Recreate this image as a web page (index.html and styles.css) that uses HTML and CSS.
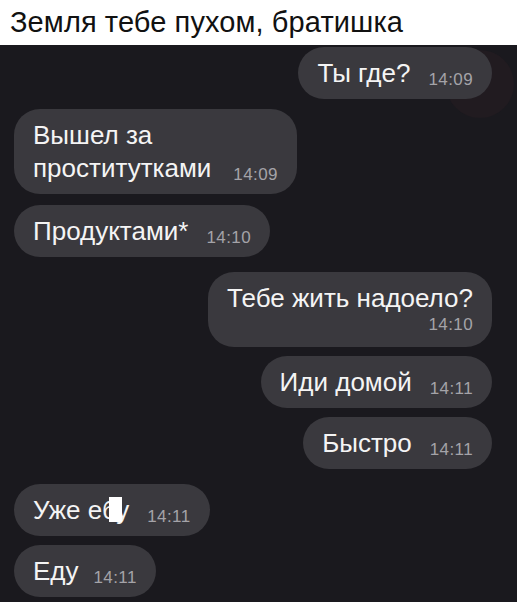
FILE: index.html
```html
<!DOCTYPE html>
<html lang="ru">
<head>
    <meta charset="UTF-8">
    <title>Земля тебе пухом, братишка</title>
    <link rel="stylesheet" href="styles.css">
</head>
<body>
    <div class="caption">Земля тебе пухом, братишка</div>

    <div class="chat">
        <div class="watermark"></div>

        <div class="msg out">Ты где?<span class="time">14:09</span></div>

        <div class="msg in group-first">Вышел за<br>проститутками<span class="time wide">14:09</span></div>
        <div class="msg in next">Продуктами*<span class="time">14:10</span></div>

        <div class="msg out group">Тебе жить надоело?<span class="time block">14:10</span></div>
        <div class="msg out">Иди домой<span class="time">14:11</span></div>
        <div class="msg out">Быстро<span class="time">14:11</span></div>

        <div class="msg in group">Уже е<span class="censored">бу</span><span class="time">14:11</span></div>
        <div class="msg in">Еду<span class="time tight">14:11</span></div>
    </div>
</body>
</html>
```

FILE: styles.css
```css
body {
    margin: 0;
    background-color: #fff;
    font-family: "Liberation Sans", Arial, sans-serif;
    width: 517px;
    height: 604px;
    overflow: hidden;
}
.caption {
    height: 45px;
    padding-left: 10px;
    font-size: 29px;
    line-height: 44px;
    letter-spacing: 0.1px;
    color: #111;
}
.chat {
    position: relative;
    background-color: #1a191e;
    height: 557px;
    padding: 2px 25px 0 14px;
    display: flex;
    flex-direction: column;
    gap: 9px;
    box-sizing: border-box;
}
/* faint watermark behind the first bubble */
.watermark {
    position: absolute;
    left: 446px;
    top: 5px;
    width: 68px;
    height: 68px;
    border-radius: 50%;
    background-color: #211b20;
}
.msg {
    position: relative;
    padding: 10px 19px 9px 19px;
    border-radius: 26px;
    background-color: #3a393e;
    color: #f4f4f4;
    font-size: 26px;
    line-height: 33px;
    white-space: nowrap;
}
.msg.in {
    align-self: flex-start;
}
.msg.out {
    align-self: flex-end;
}
.msg.group-first {
    margin-top: 1px;
}
.msg.next {
    margin-top: 2px;
}
.msg.group {
    margin-top: 6px;
}
.time {
    font-size: 17px;
    line-height: 1;
    letter-spacing: 0.4px;
    color: #a4a3a8;
    margin-left: 18px;
    vertical-align: -3px;
}
.time.wide {
    margin-left: 22px;
}
.time.tight {
    margin-left: 15px;
}
.time.block {
    display: block;
    text-align: right;
    line-height: 20px;
    margin: 0 0 3px 0;
    vertical-align: baseline;
}
.censored {
    position: relative;
}
.censored::after {
    content: "";
    position: absolute;
    left: 7px;
    top: 2px;
    width: 13px;
    height: 25px;
    background-color: #fff;
}
```
